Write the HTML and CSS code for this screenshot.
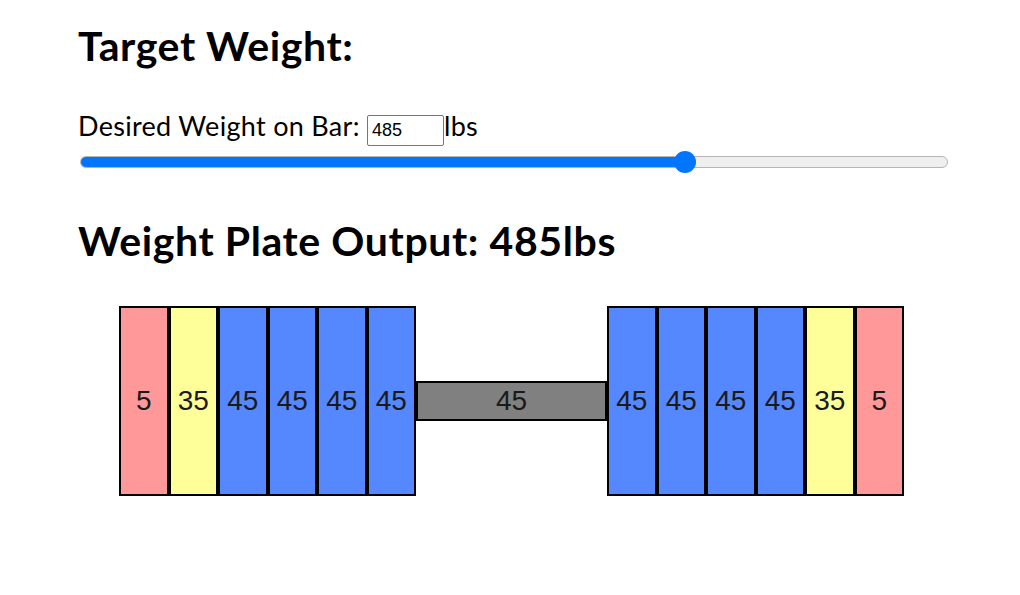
FILE: index.html
```html
<!DOCTYPE html>
<html>
<head>
<meta charset="utf-8">
<link rel="stylesheet" href="styles.css">
</head>
<body>
<div class="page">
  <h1 class="title">Target Weight:</h1>
  <div class="desired">Desired Weight on Bar: <input class="num" type="text" value="485">lbs</div>
  <input class="slider" type="range" min="0" max="690" step="5" value="485" style="--fill: 70.4%">
  <h1 class="title output">Weight Plate Output: 485lbs</h1>
  <div class="barbell">
    <div class="side">
      <div class="plate p5">5</div>
      <div class="plate p35">35</div>
      <div class="plate p45">45</div>
      <div class="plate p45">45</div>
      <div class="plate p45">45</div>
      <div class="plate p45">45</div>
    </div>
    <div class="bar">45</div>
    <div class="side">
      <div class="plate p45">45</div>
      <div class="plate p45">45</div>
      <div class="plate p45">45</div>
      <div class="plate p45">45</div>
      <div class="plate p35">35</div>
      <div class="plate p5">5</div>
    </div>
  </div>
</div>
</body>
</html>
```
FILE: styles.css
```css
html, body {
  margin: 0;
  padding: 0;
  background: #fff;
}
body {
  font-family: Lato, "Noto Sans", sans-serif;
  color: #000;
}
.page {
  padding: 0 70px 0 78px;
}
.title {
  font-size: 41px;
  font-weight: 700;
  letter-spacing: 0.6px;
  margin: 0;
  padding-top: 21px;
  line-height: 50px;
}
.output {
  padding-top: 48px;
}
.desired {
  margin-top: 39px;
  height: 37px;
  font-size: 27px;
  letter-spacing: 0.3px;
  line-height: 32px;
  white-space: nowrap;
}
.num {
  width: 77px;
  height: 31px;
  box-sizing: border-box;
  border: 1px solid #767676;
  border-radius: 2px;
  font-family: "Liberation Sans", Arial, sans-serif;
  font-size: 18px;
  letter-spacing: 0;
  padding: 0 4px;
  margin: 0 0 0 0;
  vertical-align: baseline;
}
.slider {
  -webkit-appearance: none;
  appearance: none;
  display: block;
  width: 868px;
  height: 12px;
  margin: 9px 0 0 2px;
  border-radius: 6px;
  box-sizing: border-box;
  border: 1px solid #b5b5b5;
  background: linear-gradient(to right, #0075ff 0, #0075ff var(--fill), #efefef var(--fill), #efefef 100%);
  outline: none;
}
.slider::-webkit-slider-thumb {
  -webkit-appearance: none;
  appearance: none;
  width: 22px;
  height: 22px;
  border-radius: 50%;
  background: #0075ff;
  border: none;
}
.barbell {
  display: flex;
  align-items: center;
  padding-left: 41px;
  margin-top: 40px;
}
.side {
  display: flex;
}
.plate {
  box-sizing: border-box;
  width: 49.5px;
  height: 190px;
  border: 2px solid #000;
  display: flex;
  align-items: center;
  justify-content: center;
  font-family: "Liberation Sans", Arial, sans-serif;
  font-size: 28px;
  color: #1a1a1a;
}
.p5 { background: #ff9999; }
.p35 { background: #ffff99; }
.p45 { background: #5588ff; }
.bar {
  box-sizing: border-box;
  width: 191px;
  height: 40px;
  border: 2px solid #000;
  background: #808080;
  display: flex;
  align-items: center;
  justify-content: center;
  font-family: "Liberation Sans", Arial, sans-serif;
  font-size: 28px;
  color: #1a1a1a;
}
```
